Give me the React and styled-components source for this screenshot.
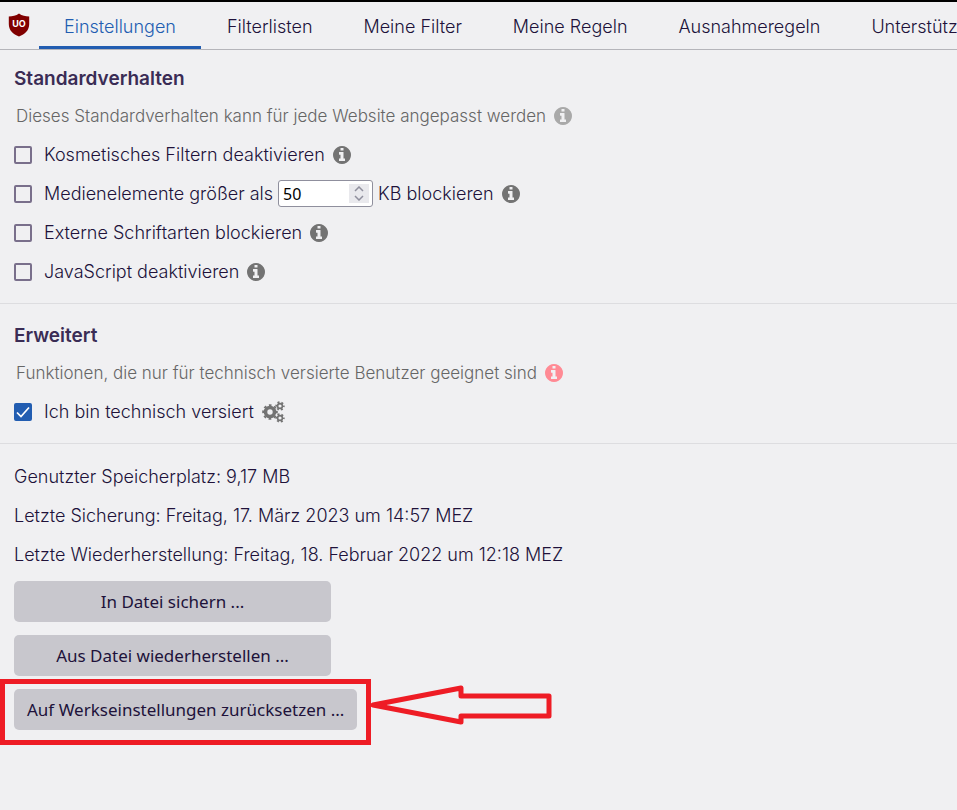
import React, { useState } from 'react';
import styled, { createGlobalStyle } from 'styled-components';

const tabs = ['Einstellungen', 'Filterlisten', 'Meine Filter', 'Meine Regeln', 'Ausnahmeregeln', 'Unterstützung'];

const Shield = () => (
    <Logo viewBox="0 0 22 24" role="img" aria-label="uBlock Origin">
        <path d="M11 0.5C8 2.7 4.500 3.500 0.800 3.500V11C0.800 17.500 5 21 11 23.500C17 21 21.200 17.500 21.200 11V3.500C17.500 3.500 14 2.700 11 0.500Z" fill="#800000" />
        <text x="11" y="14" textAnchor="middle" fill="#fff" fontFamily="Inter, sans-serif" fontSize="9" fontWeight="700">UO</text>
    </Logo>
);

const InfoIcon = () => (
    <svg width="18" height="18" viewBox="128 128 1536 1536" fill="currentColor">
        <path d="M1152 1376v-160q0-14-9-23t-23-9h-96v-512q0-14-9-23t-23-9h-320q-14 0-23 9t-9 23v160q0 14 9 23t23 9h96v320h-96q-14 0-23 9t-9 23v160q0 14 9 23t23 9h448q14 0 23-9t9-23zm-128-896v-160q0-14-9-23t-23-9h-192q-14 0-23 9t-9 23v160q0 14 9 23t23 9h192q14 0 23-9t9-23zm640 416q0 209-103 385.5t-279.5 279.5-385.5 103-385.5-103-279.5-279.5-103-385.5 103-385.5 279.5-279.5 385.5-103 385.5 103 279.5 279.5 103 385.5z" />
    </svg>
);

const Gear = ({ cx, cy, r, width, teeth }) => {
    const outer = r + width / 2 + 0.6;
    const step = (2 * Math.PI * outer) / (teeth * 2);
    return (
        <g fill="none" stroke="currentColor">
            <circle cx={cx} cy={cy} r={r} strokeWidth={width} />
            <circle cx={cx} cy={cy} r={outer} strokeWidth="1.8" strokeDasharray={step} strokeDashoffset={step / 2} />
        </g>
    );
};

const CogsIcon = () => (
    <svg width="23" height="22" viewBox="0 0 23 22">
        <Gear cx={8} cy={11} r={4.5} width={3.6} teeth={8} />
        <Gear cx={18} cy={5} r={2.4} width={1.6} teeth={6} />
        <Gear cx={18} cy={17} r={2.4} width={1.6} teeth={6} />
    </svg>
);

const Option = ({ id, label, checked, onChange, children }) => (
    <Row>
        <CheckBox id={id} type="checkbox" checked={checked} onChange={onChange} />
        <label htmlFor={id}>{label}</label>
        {children}
    </Row>
);

const Info = ({ label, tone }) => (
    <InfoLink href="#info" aria-label={label} $tone={tone}><InfoIcon /></InfoLink>
);

function App() {
    const [active, setActive] = useState('Einstellungen');
    const [size, setSize] = useState(50);
    const [options, setOptions] = useState({ advanced: true });

    const bind = (name) => ({
        id: name,
        checked: !!options[name],
        onChange: (e) => setOptions({ ...options, [name]: e.target.checked }),
    });

    return (
        <>
            <GlobalStyle />
            <Header>
                <Shield />
                <TabList>
                    {tabs.map((tab) => (
                        <Tab key={tab} type="button" $active={tab === active} onClick={() => setActive(tab)}>{tab}</Tab>
                    ))}
                </TabList>
            </Header>
            <main>
                {/* Default behavior */}
                <Section>
                    <Title>Standardverhalten</Title>
                    <Description>
                        Dieses Standardverhalten kann für jede Website angepasst werden
                        <Info label="Standardverhalten" tone="#a9a9a9" />
                    </Description>
                    <Option {...bind('cosmetic')} label="Kosmetisches Filtern deaktivieren">
                        <Info label="Kosmetisches Filtern" />
                    </Option>
                    <Option {...bind('media')} label="Medienelemente größer als">
                        <NumberBox>
                            <NumberInput
                                type="number"
                                aria-label="Größe in KB"
                                value={size}
                                onChange={(e) => setSize(Number(e.target.value))}
                            />
                            <Spinner>
                                <Step type="button" aria-label="Erhöhen" onClick={() => setSize(size + 1)}>
                                    <svg width="10" height="6" viewBox="0 0 10 6"><path d="M1 5L5 1L9 5" /></svg>
                                </Step>
                                <Step type="button" aria-label="Verringern" onClick={() => setSize(size - 1)}>
                                    <svg width="10" height="6" viewBox="0 0 10 6"><path d="M1 1L5 5L9 1" /></svg>
                                </Step>
                            </Spinner>
                        </NumberBox>
                        <label htmlFor="media">KB blockieren</label>
                        <Info label="Große Medienelemente" />
                    </Option>
                    <Option {...bind('fonts')} label="Externe Schriftarten blockieren">
                        <Info label="Externe Schriftarten" />
                    </Option>
                    <Option {...bind('javascript')} label="JavaScript deaktivieren">
                        <Info label="JavaScript" />
                    </Option>
                </Section>

                {/* Advanced */}
                <Section>
                    <Title>Erweitert</Title>
                    <Description>
                        Funktionen, die nur für technisch versierte Benutzer geeignet sind
                        <Info label="Erweiterte Funktionen" tone="#ff8a94" />
                    </Description>
                    <Option {...bind('advanced')} label="Ich bin technisch versiert">
                        <InfoLink href="#advanced" aria-label="Erweiterte Einstellungen"><CogsIcon /></InfoLink>
                    </Option>
                </Section>

                {/* Storage and backup */}
                <Section>
                    <Line>Genutzter Speicherplatz: 9,17 MB</Line>
                    <Line>Letzte Sicherung: Freitag, 17. März 2023 um 14:57 MEZ</Line>
                    <Line>Letzte Wiederherstellung: Freitag, 18. Februar 2022 um 12:18 MEZ</Line>
                    <Actions>
                        <Button type="button">In Datei sichern ...</Button>
                        <Button type="button">Aus Datei wiederherstellen ...</Button>
                        <Marked>
                            <Button type="button">Auf Werkseinstellungen zurücksetzen ...</Button>
                            <Frame />
                            <Arrow viewBox="0 0 182 42" aria-hidden="true">
                                <path d="M3 21L91 4V12H179V32H91V38Z" />
                            </Arrow>
                        </Marked>
                    </Actions>
                </Section>
            </main>
        </>
    );
}

export default App;

const GlobalStyle = createGlobalStyle`
    * {
        box-sizing: border-box;
    }

    body {
        min-height: 100vh;
        margin: 0;
        background: #f0f0f2;
        color: #20123a;
        font-family: Inter, sans-serif;
        font-size: 18px;
        font-weight: 300;
    }
`;

// Header
const Header = styled.header`
    display: flex;
    align-items: stretch;
    height: 50px;
    border-top: 2px solid #000;
    border-bottom: 1px solid #b5b5ba;
    overflow: hidden;
`;

const Logo = styled.svg`
    flex: none;
    width: 22px;
    height: 24px;
    margin: 11px 9px 0 8px;
`;

const TabList = styled.nav`
    display: flex;
    gap: 1px;
`;

const Tab = styled.button`
    flex: none;
    padding: 5px 25px 0;
    border: 0;
    border-bottom: 3px solid ${({ $active }) => ($active ? '#225db1' : 'transparent')};
    background: none;
    color: ${({ $active }) => ($active ? '#225db1' : 'inherit')};
    font: inherit;
    white-space: nowrap;
    cursor: pointer;
`;

// Sections
const Section = styled.section`
    padding: 10px 14px 12px;

    & + & {
        padding-top: 13px;
        border-top: 1px solid #dddde0;
    }
`;

const Title = styled.h2`
    margin: 0;
    color: #3a2c55;
    font-size: 19px;
    font-weight: 600;
    line-height: 37px;
`;

const Description = styled.p`
    display: flex;
    align-items: center;
    margin: 0;
    padding-left: 2px;
    color: #666;
    font-size: 17px;
    line-height: 38px;
`;

const Row = styled.div`
    display: flex;
    align-items: center;
    height: 39px;
`;

const Line = styled.p`
    margin: 0;
    line-height: 39px;
`;

const CheckBox = styled.input`
    appearance: none;
    flex: none;
    width: 18px;
    height: 18px;
    margin: 0 12px 0 0;
    border: 2px solid #796f8b;
    border-radius: 2px;

    &:checked {
        border-color: #225db1;
        background: #225db1 url("data:image/svg+xml,%3Csvg xmlns='http://www.w3.org/2000/svg' viewBox='0 0 14 14'%3E%3Cpath d='M1 7.500l4 4L13 2.500' fill='none' stroke='white' stroke-width='1.700'/%3E%3C/svg%3E") center / 14px no-repeat;
    }
`;

const InfoLink = styled.a`
    display: inline-flex;
    margin-left: 8px;
    color: ${({ $tone }) => $tone || '#737373'};
`;

// Number field
const NumberBox = styled.span`
    display: flex;
    align-items: center;
    width: 95px;
    height: 27px;
    margin: 0 5px;
    padding: 0 3px 0 4px;
    border: 1px solid #8f8f9d;
    border-radius: 3px;
    background: #fff;
`;

const NumberInput = styled.input`
    appearance: textfield;
    flex: 1;
    min-width: 0;
    padding: 0;
    border: 0;
    outline: 0;
    background: none;
    color: #000;
    font: 400 16px "Noto Sans", sans-serif;

    &::-webkit-inner-spin-button {
        appearance: none;
    }
`;

const Spinner = styled.span`
    display: flex;
    flex-direction: column;
    width: 20px;
    height: 19px;
    background: #e9e9ed;
`;

const Step = styled.button`
    display: flex;
    flex: 1;
    align-items: center;
    justify-content: center;
    padding: 0;
    border: 0;
    background: none;

    path {
        fill: none;
        stroke: #8f8f9d;
        stroke-width: 1.5;
    }
`;

// Buttons
const Actions = styled.div`
    display: flex;
    flex-direction: column;
    align-items: flex-start;
    gap: 13px;
    padding: 7px 0 20px;
`;

const Button = styled.button`
    min-width: 317px;
    height: 41px;
    padding: 0 13px;
    border: 0;
    border-radius: 5px;
    background: #c8c7cd;
    color: #20123a;
    font: 400 17px "Noto Sans", sans-serif;
    cursor: pointer;
`;

// Highlight around the reset button
const Marked = styled.div`
    position: relative;
    display: flex;
`;

const Frame = styled.span`
    position: absolute;
    inset: -10px -14px -15px;
    border: 5px solid #ee1c25;
    pointer-events: none;
`;

const Arrow = styled.svg`
    position: absolute;
    top: -5px;
    left: 100%;
    width: 182px;
    height: 42px;
    margin-left: 13px;
    pointer-events: none;

    path {
        fill: none;
        stroke: #ee1c25;
        stroke-width: 5;
        stroke-linejoin: round;
    }
`;
